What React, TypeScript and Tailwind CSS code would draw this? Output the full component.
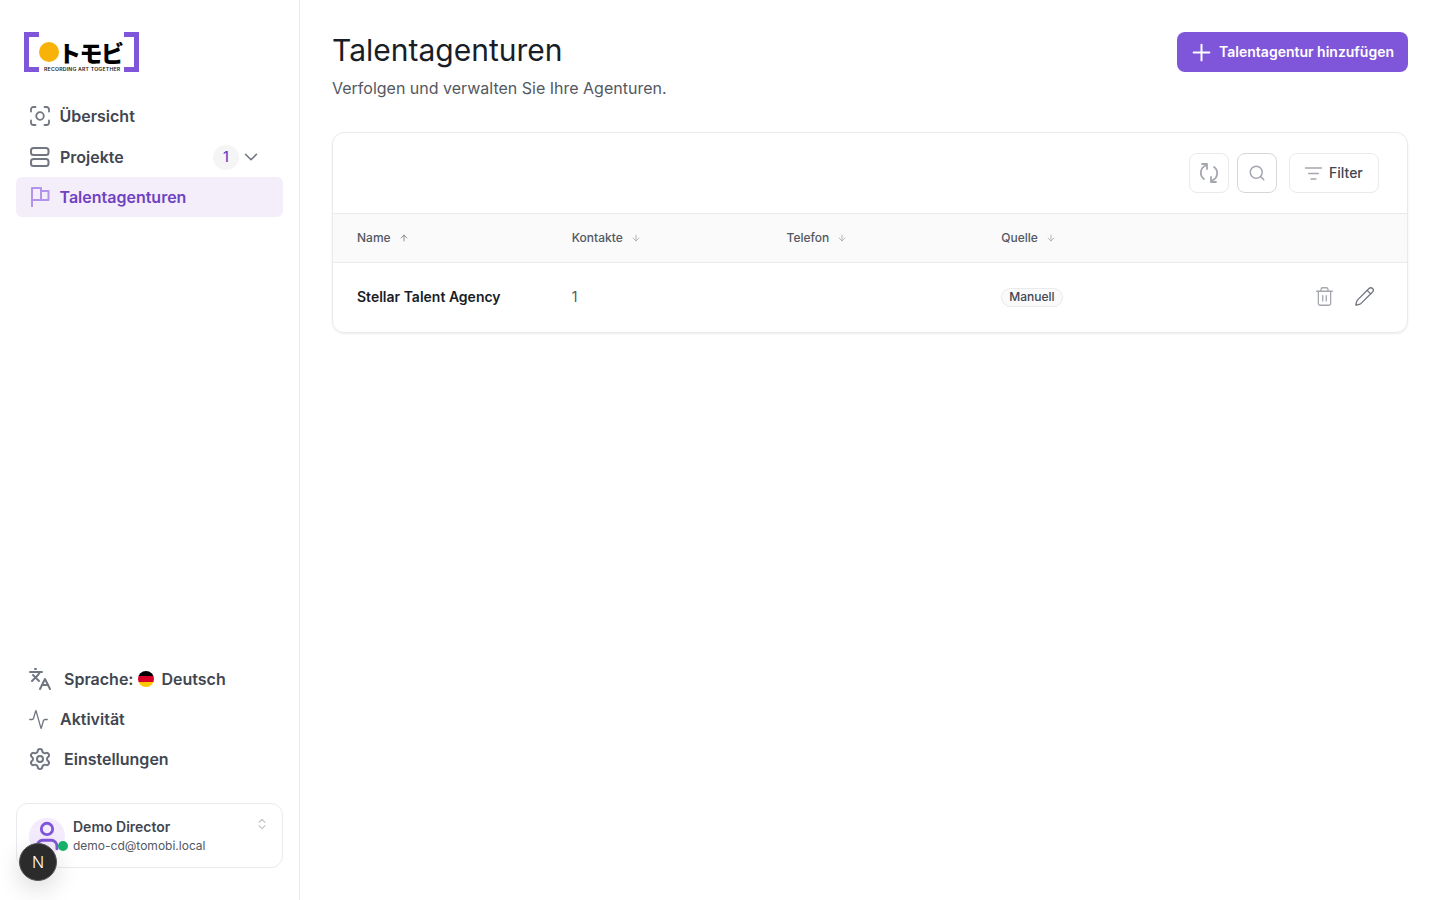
import { Activity, ArrowDown, ArrowUp, ChevronDown, ChevronsUpDown, Languages, ListFilter, Pencil, Plus, Search, Settings, Trash2, User } from "lucide-react";

function FocusIcon() {
  return (
    <svg width="20" height="20" viewBox="0 0 20 20" fill="none" stroke="#717680" strokeWidth="1.8" strokeLinecap="round">
      <path d="M5.5 1H3.5A2.5 2.5 0 0 0 1 3.5V5.5" />
      <path d="M14.5 1h2A2.5 2.5 0 0 1 19 3.5V5.5" />
      <path d="M5.5 19H3.5A2.5 2.5 0 0 1 1 16.5V14.5" />
      <path d="M14.5 19h2a2.5 2.5 0 0 0 2.5-2.5V14.5" />
      <circle cx="10" cy="10" r="3.8" />
    </svg>
  );
}

function RowsIcon() {
  return (
    <svg width="22" height="22" viewBox="0 0 22 22" fill="none" stroke="#717680" strokeWidth="2">
      <rect x="1" y="2" width="17.5" height="7" rx="2.5" />
      <rect x="1" y="13" width="17.5" height="7" rx="2.5" />
    </svg>
  );
}

function FlagIcon() {
  return (
    <svg width="20" height="22" viewBox="0 0 20 22" fill="none" stroke="#b294ec" strokeWidth="2" strokeLinejoin="round">
      <path d="M2 21V2h9v12H2" />
      <path d="M11 5h7.5v9H11" />
    </svg>
  );
}

function RefreshIcon() {
  return (
    <svg width="20" height="22" viewBox="0 0 20 22" fill="none" stroke="#a4a7ae" strokeWidth="1.8" strokeLinecap="round" strokeLinejoin="round">
      <path d="M7 3.5A7.7 7.7 0 0 0 5 17" />
      <path d="M13 18.5A7.7 7.7 0 0 0 15 5" />
      <path d="M3 2h5v5" />
      <path d="M17 20h-5v-5" />
    </svg>
  );
}

function Logo() {
  return (
    <div className="relative w-[115px] h-10 ml-6 mt-8">
      <div className="absolute left-0 top-0 w-[15px] h-10 border-[5px] border-r-0 border-[#7f56d9]" />
      <div className="absolute right-0 top-0 w-[15px] h-10 border-[5px] border-l-0 border-[#7f56d9]" />
      <div className="absolute left-[15px] top-[10px] w-5 h-5 rounded-full bg-[#f9b208]" />
      <div className="absolute left-[34px] top-[9px] text-[23px] leading-[22px] tracking-[-1.5px] font-black text-black font-['Noto_Sans_CJK_JP',sans-serif]">トモビ</div>
      <div className="absolute left-[19px] top-[35px] bg-white px-px text-[5.2px] leading-[5px] whitespace-nowrap text-[#222] font-semibold tracking-[0.2px]">RECORDING ART TOGETHER</div>
    </div>
  );
}

function GermanFlag() {
  return (
    <span className="w-4 h-4 ml-px rounded-full overflow-hidden flex flex-col">
      <span className="h-[5px] bg-black" />
      <span className="h-[6px] bg-[#d80027]" />
      <span className="h-[5px] bg-[#ffc800]" />
    </span>
  );
}

function SortHead({ label, up }: { label: string; up?: boolean }) {
  const Arrow = up ? ArrowUp : ArrowDown;
  return (
    <div className="flex items-center gap-2 text-xs font-medium text-[#535862]">
      {label}
      <Arrow size={10} className={up ? "text-[#717680]" : "text-[#a4a7ae]"} />
    </div>
  );
}

export default function App() {
  return (
    <div className="flex h-screen bg-white font-['Inter',sans-serif] overflow-hidden">
      <aside className="relative w-[300px] shrink-0 border-r border-[#e9eaeb] flex flex-col">
        <Logo />
        <nav className="mt-6 px-4 flex flex-col text-base font-semibold text-[#414651]">
          <div className="h-10 flex items-center gap-[9.5px] pl-3.5">
            <FocusIcon />
            <span>Übersicht</span>
          </div>
          <div className="h-10 mt-px flex items-center pl-3.5 pr-[21px] gap-2">
            <RowsIcon />
            <span>Projekte</span>
            <span className="ml-auto w-[26px] h-[25px] rounded-full bg-[#f5f5f5] text-sm font-medium text-[#6941c6] flex items-center justify-center">1</span>
            <ChevronDown size={22} strokeWidth={1.75} className="-ml-[7px] text-[#717680]" />
          </div>
          <div className="h-10 flex items-center gap-[9.5px] pl-3.5 rounded-md bg-[#f4eefb] text-[#6f42c1]">
            <FlagIcon />
            <span>Talentagenturen</span>
          </div>
        </nav>
        <div className="mt-auto px-4 flex flex-col text-base font-semibold text-[#414651]">
          <div className="h-10 flex items-center pl-3 gap-[4px]">
            <Languages size={24} strokeWidth={2} className="text-[#717680]" />
            <span className="ml-2">Sprache:</span>
            <GermanFlag />
            <span className="ml-[3px]">Deutsch</span>
          </div>
          <div className="h-10 flex items-center pl-3 gap-[11px]">
            <Activity size={21} strokeWidth={1.5} className="text-[#717680]" />
            <span className="-ml-[11px] pl-[11px]">Aktivität</span>
          </div>
          <div className="h-10 flex items-center pl-3 gap-3">
            <Settings size={24} strokeWidth={2} className="text-[#717680]" />
            <span>Einstellungen</span>
          </div>
        </div>
        <div className="mx-4 mt-6 mb-8 h-[65px] border border-[#e9eaeb] rounded-xl flex pl-3 pt-[14px] relative">
          <div className="relative w-9 h-9 rounded-full bg-[#f4ebff] flex items-center justify-center overflow-visible">
            <User size={34} strokeWidth={2} className="text-[#7f56d9]" />
            <span className="absolute -right-[3px] bottom-[3px] w-2.5 h-2.5 rounded-full bg-[#17b26a]" />
          </div>
          <div className="ml-2 -mt-[1px]">
            <div className="text-sm leading-5 font-semibold text-[#414651]">Demo Director</div>
            <div className="text-xs leading-5 -mt-px text-[#535862]">demo-cd@tomobi.local</div>
          </div>
          <ChevronsUpDown size={14} className="absolute right-[13px] top-[13px] text-[#c4c6cb]" />
        </div>
        <div className="absolute left-[19px] top-[843px] w-[38px] h-[38px] rounded-full bg-[#2b2b2b] border border-[#555] shadow-[0_8px_24px_rgba(0,0,0,0.15)] flex items-center justify-center text-white text-base font-light">N</div>
      </aside>

      <main className="flex-1 px-8 pt-8">
        <div className="flex items-start justify-between">
          <div>
            <h1 className="text-[30px] leading-9 text-[#181d27]">Talentagenturen</h1>
            <p className="mt-2 text-base leading-6 text-[#535862]">Verfolgen und verwalten Sie Ihre Agenturen.</p>
          </div>
          <button type="button" className="h-10 px-3.5 rounded-lg bg-[#7f56d9] text-white text-sm font-semibold flex items-center gap-2">
            <Plus size={27} strokeWidth={1.75} className="-mx-[3.5px]" />
            Talentagentur hinzufügen
          </button>
        </div>

        <div className="mt-8 border border-[#e9eaeb] rounded-xl shadow-[0_1px_2px_rgba(10,13,18,0.08)] overflow-hidden">
          <div className="h-20 flex items-center justify-end pr-7 gap-2">
            <button type="button" className="w-10 h-10 border border-[#e9eaeb] rounded-lg flex items-center justify-center">
              <RefreshIcon />
            </button>
            <button type="button" className="w-10 h-10 border border-[#d5d7da] rounded-lg flex items-center justify-center text-[#a4a7ae] mr-1">
              <Search size={18} />
            </button>
            <button type="button" className="h-10 w-[90px] border border-[#e9eaeb] rounded-lg flex items-center pl-[14px] gap-[6px] text-sm font-medium text-[#414651]">
              <ListFilter size={19} className="text-[#a4a7ae]" />
              Filter
            </button>
          </div>
          <div className="grid grid-cols-[214.75px_214.75px_214.75px_1fr] items-center h-[50px] px-6 bg-[#fafafa] border-y border-[#e9eaeb]">
            <SortHead label="Name" up />
            <SortHead label="Kontakte" />
            <SortHead label="Telefon" />
            <SortHead label="Quelle" />
          </div>
          <div className="grid grid-cols-[214.75px_214.75px_214.75px_1fr] items-center h-[69px] pb-px px-6">
            <div className="text-sm font-semibold text-[#181d27]">Stellar Talent Agency</div>
            <div className="text-sm text-[#535862]">1</div>
            <div />
            <div className="flex items-center justify-between pr-2">
              <span className="px-[7px] h-[19px] flex items-center rounded-full border border-[#e9eaeb] bg-[#fafafa] text-xs font-medium text-[#414651]">Manuell</span>
              <div className="flex items-center gap-[19px] -mt-px">
                <Trash2 size={21} strokeWidth={1.5} className="text-[#a4a7ae]" />
                <Pencil size={21} strokeWidth={1.5} className="text-[#717680]" />
              </div>
            </div>
          </div>
        </div>
      </main>
    </div>
  );
}
